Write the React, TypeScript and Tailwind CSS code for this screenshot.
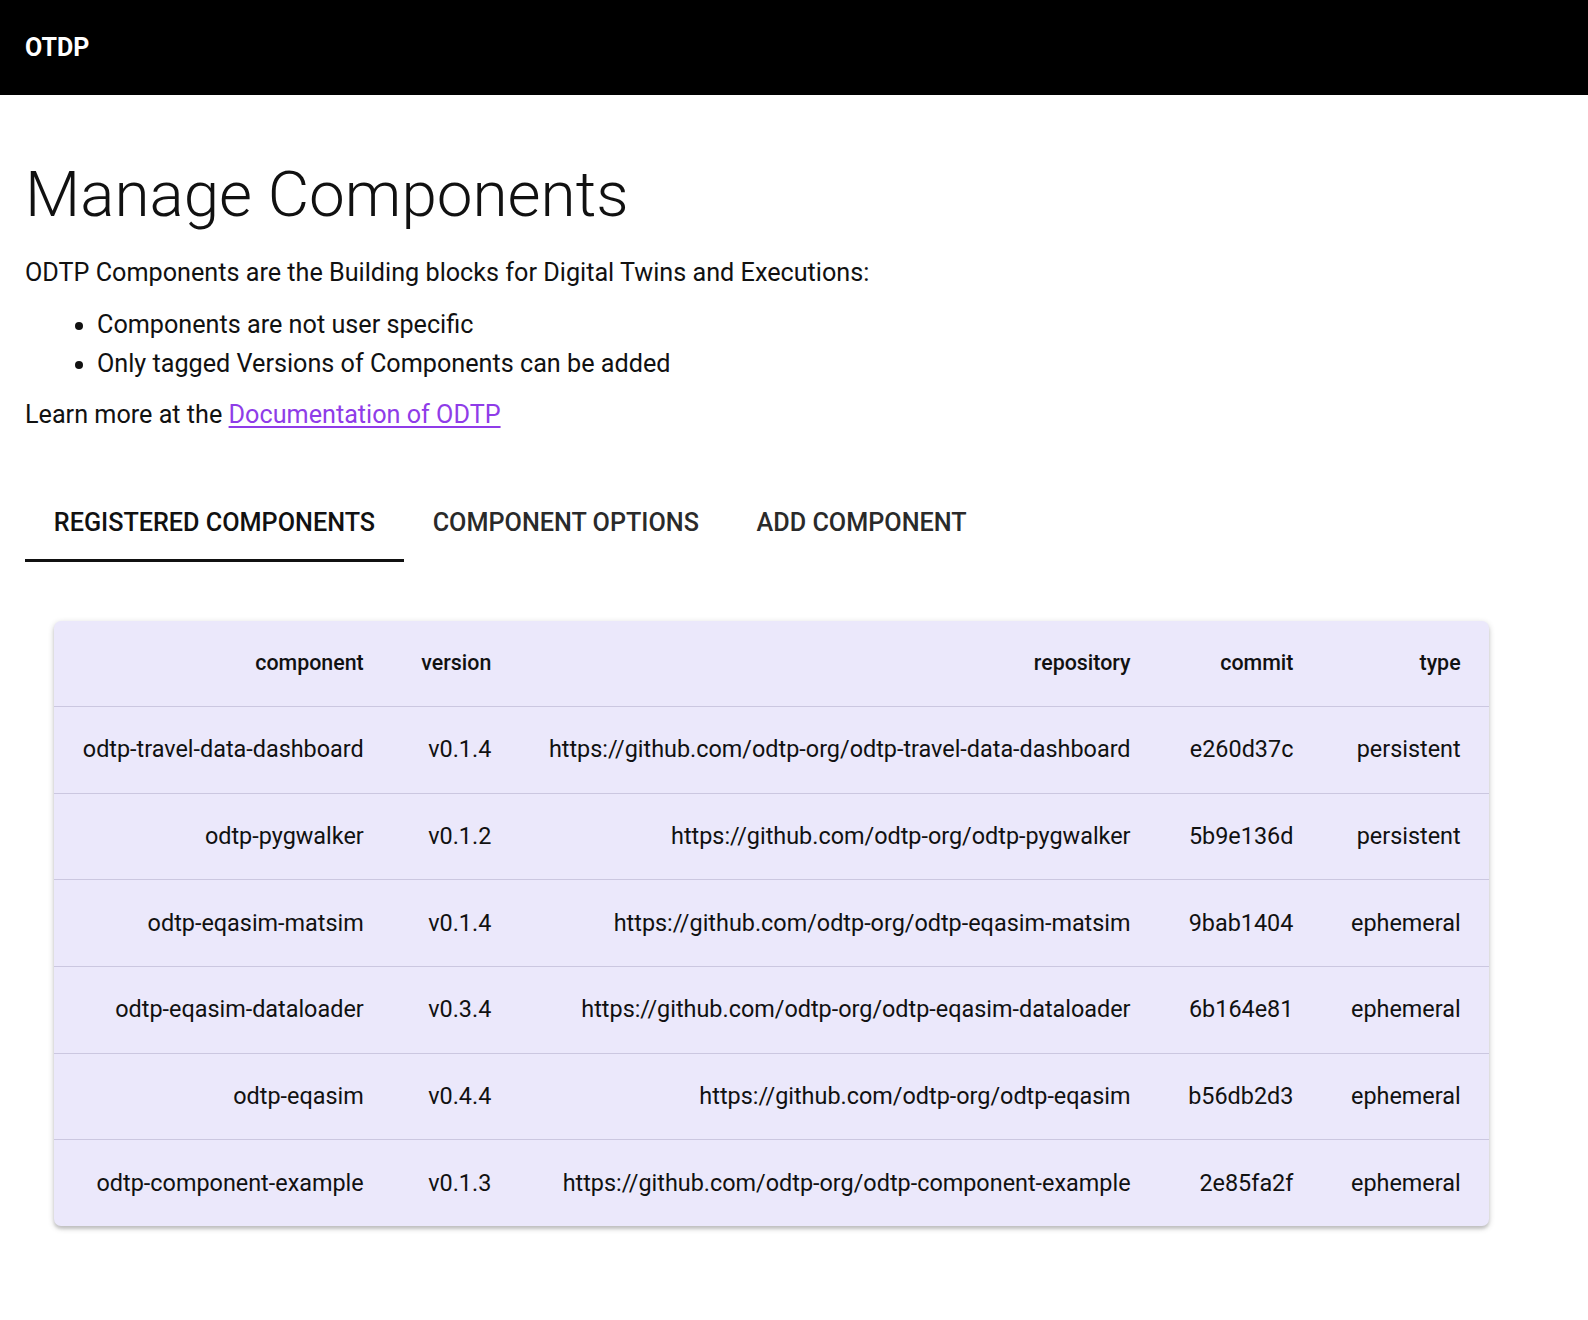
import React from "react";

type Row = {
  component: string;
  version: string;
  repository: string;
  commit: string;
  type: string;
};

const rows: Row[] = [
  { component: "odtp-travel-data-dashboard", version: "v0.1.4", repository: "https://github.com/odtp-org/odtp-travel-data-dashboard", commit: "e260d37c", type: "persistent" },
  { component: "odtp-pygwalker", version: "v0.1.2", repository: "https://github.com/odtp-org/odtp-pygwalker", commit: "5b9e136d", type: "persistent" },
  { component: "odtp-eqasim-matsim", version: "v0.1.4", repository: "https://github.com/odtp-org/odtp-eqasim-matsim", commit: "9bab1404", type: "ephemeral" },
  { component: "odtp-eqasim-dataloader", version: "v0.3.4", repository: "https://github.com/odtp-org/odtp-eqasim-dataloader", commit: "6b164e81", type: "ephemeral" },
  { component: "odtp-eqasim", version: "v0.4.4", repository: "https://github.com/odtp-org/odtp-eqasim", commit: "b56db2d3", type: "ephemeral" },
  { component: "odtp-component-example", version: "v0.1.3", repository: "https://github.com/odtp-org/odtp-component-example", commit: "2e85fa2f", type: "ephemeral" },
];

const columns: (keyof Row)[] = ["component", "version", "repository", "commit", "type"];

const tabs = ["Registered Components", "Component Options", "Add Component"];

export default function App() {
  return (
    <div className="min-h-screen bg-white text-[#111] font-['Roboto',sans-serif]">
      {/* Header */}
      <header className="h-[95px] bg-black flex items-center px-[25px]">
        <span className="text-white text-[25px] font-bold">OTDP</span>
      </header>

      <main className="px-[25px]">
        <h1 className="mt-[68px] text-[63.8px] leading-[64px] font-light">Manage Components</h1>

        <div className="text-[25.2px] leading-[38.4px]">
          <p className="mt-[27px]">ODTP Components are the Building blocks for Digital Twins and Executions:</p>
          <ul className="mt-[14px] list-disc pl-[72px]">
            <li>Components are not user specific</li>
            <li>Only tagged Versions of Components can be added</li>
          </ul>
          <p className="mt-[13px]">
            Learn more at the{" "}
            <a href="#" className="text-[#8f3ce8] underline underline-offset-[3px]">
              Documentation of ODTP
            </a>
          </p>
        </div>

        {/* Tabs */}
        <div className="mt-[49px] flex">
          {tabs.map((t, i) => (
            <button
              key={t}
              className={
                "relative h-[78px] px-[28.8px] uppercase text-[25.2px] font-medium " +
                (i === 0 ? "text-[#111]" : "text-[#2a2a2a]")
              }
            >
              {t}
              {i === 0 && <span className="absolute left-0 right-0 bottom-0 h-[3px] bg-[#111]" />}
            </button>
          ))}
        </div>

        {/* Table card */}
        <div className="mt-[59px] ml-[29px] inline-block rounded-[7px] bg-[#ebe8fb] shadow-[0_2px_6px_rgba(0,0,0,0.2),0_3px_3px_rgba(0,0,0,0.12)] overflow-hidden">
          <table className="border-collapse">
            <thead>
              <tr className="h-[86px]">
                {columns.map((c) => (
                  <th key={c} className="px-[28.8px] text-right text-[21.4px] font-medium text-[#111]">
                    {c}
                  </th>
                ))}
              </tr>
            </thead>
            <tbody>
              {rows.map((r) => (
                <tr key={r.component} className="h-[86.6px] border-t border-[#cbc7e0]">
                  {columns.map((c) => (
                    <td key={c} className="px-[28.8px] text-right text-[23.4px] whitespace-nowrap text-[#111]">
                      {r[c]}
                    </td>
                  ))}
                </tr>
              ))}
            </tbody>
          </table>
        </div>
        <div className="h-[95px]" />
      </main>
    </div>
  );
}
